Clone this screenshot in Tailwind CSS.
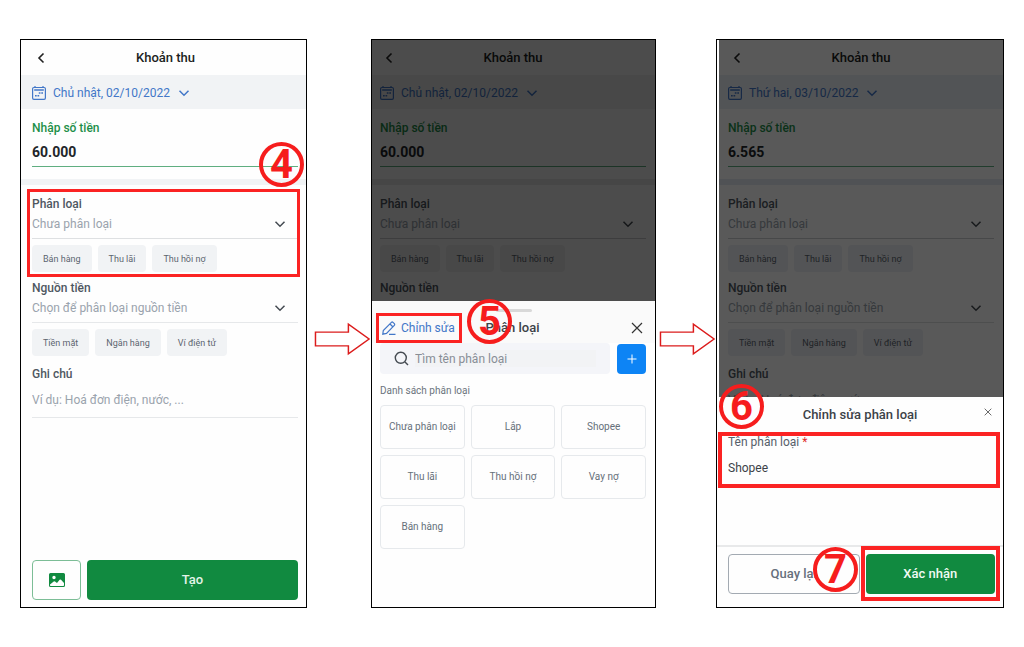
<!DOCTYPE html>
<html lang="vi">
<head>
<meta charset="utf-8">
<meta name="viewport" content="width=device-width, initial-scale=1">
<title>Khoản thu</title>
<script src="https://cdn.jsdelivr.net/npm/@tailwindcss/browser@4"></script>
</head>
<body class="bg-white font-[Roboto,'Noto_Sans',sans-serif] text-xs text-[#5c6570]">
<svg class="hidden" aria-hidden="true">
  <symbol id="back" viewBox="0 0 8 12"><path d="M6.5 1.5 2 6l4.500 4.500" fill="none" stroke="currentColor" stroke-width="1.600"/></symbol>
  <symbol id="down" viewBox="0 0 12 8"><path d="M1.500 1.800 6 6.200l4.500-4.400" fill="none" stroke="currentColor" stroke-width="1.500"/></symbol>
  <symbol id="cal" viewBox="0 0 14 14"><rect x=".6" y="1.500" width="12.800" height="11.900" rx="1.300" fill="none" stroke="currentColor" stroke-width="1.200"/><path d="M3 0v2M11 0v2" stroke="currentColor" stroke-width="1.200"/><path d="M2.200 4h9.600" stroke="currentColor" stroke-width="1.500"/><path d="M6.800 7h1.700M9.300 7H11M3 9.800h1.700M5.500 9.800h1.700" stroke="currentColor" stroke-width="1.600"/></symbol>
  <symbol id="cross" viewBox="0 0 12 12"><path d="m1 1 10 10M11 1 1 11" fill="none" stroke="currentColor" stroke-width="1.200"/></symbol>
  <symbol id="arrow" viewBox="0 0 58 34"><path d="M1.500 10H35V2l21 15-21 15v-8H1.500z" fill="#fff" stroke="#dc1c1c" stroke-width="1.500"/></symbol>
</svg>

<main class="grid min-h-screen grid-cols-[287fr_64fr_285fr_60fr_288fr] px-5 py-[39px]">

  <section class="relative flex flex-col overflow-hidden border border-black bg-[#fefefe]">
    <header class="grid h-[35px] grid-cols-[1fr_auto_1fr] items-center pl-4 pr-3">
      <button type="button" aria-label="Quay lại" class="text-[#222]"><svg class="h-3 w-2"><use href="#back"/></svg></button>
      <h1 class="text-[13px] font-medium text-[#1c1f22]">Khoản thu</h1>
    </header>
    <button type="button" class="flex h-[34px] items-center bg-[#f1f3f5] pl-[11px] pt-0.5 text-[#4277c8]">
      <svg class="h-3.5 w-3.5"><use href="#cal"/></svg><span class="ml-[7px] mr-2">Chủ nhật, 02/10/2022</span><svg class="h-2 w-3"><use href="#down"/></svg>
    </button>
    <div class="mb-3 flex flex-col pl-[11px] pr-2 pt-[9px]">
      <label for="amount1" class="leading-5 font-medium text-[#1d8f48]">Nhập số tiền</label>
      <input id="amount1" value="60.000" class="h-[29px] w-full border-b border-[#5fae80] bg-transparent text-sm font-bold text-[#222529] outline-none">
    </div>
    <div class="h-1.5 bg-[#f1f3f5]"></div>
    <div class="flex flex-col pl-[11px] pr-2 pt-[9px]">
      <div class="relative flex flex-col">
        <label for="cat1" class="leading-5 font-medium text-[#4e5761]">Phân loại</label>
        <div class="flex items-center border-b border-[#dee0e2] pb-1 pr-3">
          <select id="cat1" class="h-5 flex-1 appearance-none bg-transparent text-[#9aa3ad]"><option>Chưa phân loại</option></select>
          <svg class="h-2 w-3 text-[#454b52]"><use href="#down"/></svg>
        </div>
        <div class="mt-1.5 flex gap-1.5 text-[9px]">
          <button type="button" class="h-[27px] rounded bg-[#f1f3f5] px-[11px]">Bán hàng</button>
          <button type="button" class="h-[27px] rounded bg-[#f1f3f5] px-[11px]">Thu lãi</button>
          <button type="button" class="h-[27px] rounded bg-[#f1f3f5] px-[11px]">Thu hồi nợ</button>
        </div>
        <div class="pointer-events-none absolute -bottom-[5px] -left-[5px] -right-0.5 -top-[5px] border-[3px] border-[#fb2323]"></div>
      </div>
      <label for="src1" class="mt-1.5 leading-5 font-medium text-[#4e5761]">Nguồn tiền</label>
      <div class="flex items-center border-b border-[#e6e8ea] pb-1 pr-3">
        <select id="src1" class="h-5 flex-1 appearance-none bg-transparent text-[#9aa3ad]"><option>Chọn để phân loại nguồn tiền</option></select>
        <svg class="h-2 w-3 text-[#454b52]"><use href="#down"/></svg>
      </div>
      <div class="mt-1.5 flex gap-1.5 text-[9px]">
        <button type="button" class="h-[27px] rounded bg-[#f1f3f5] px-[11px]">Tiền mặt</button>
        <button type="button" class="h-[27px] rounded bg-[#f1f3f5] px-[11px]">Ngân hàng</button>
        <button type="button" class="h-[27px] rounded bg-[#f1f3f5] px-[11px]">Ví điện tử</button>
      </div>
      <label for="note1" class="mt-2 leading-5 font-medium text-[#4e5761]">Ghi chú</label>
      <input id="note1" placeholder="Ví dụ: Hoá đơn điện, nước, ..." class="h-[34px] border-b border-[#e6e8ea] bg-transparent pb-0.5 outline-none placeholder:text-[#9aa3ad]">
    </div>
    <div class="mt-auto flex gap-1.5 pb-[7px] pl-[11px] pr-2">
      <button type="button" aria-label="Thêm ảnh" class="flex h-10 w-[49px] items-center justify-center rounded border border-[#7cbd96] text-[#118a40]">
        <svg class="h-4 w-4" viewBox="0 0 16 16"><path fill="currentColor" fill-rule="evenodd" d="M1.500 1h13A1.500 1.500 0 0 1 16 2.500v11a1.500 1.500 0 0 1-1.500 1.500h-13A1.500 1.500 0 0 1 0 13.500v-11A1.500 1.500 0 0 1 1.500 1M5 3.800a1.700 1.700 0 1 0 0 3.400 1.700 1.700 0 0 0 0-3.400M1 13.300q0 .7.700.7h12.600q.7 0 .7-.7V11l-3-3.200q-.7-.6-1.400 0L8 11 6 9.500q-.7-.4-1.300 0L1 12.500z"/></svg>
      </button>
      <button type="button" class="h-10 flex-1 rounded bg-[#118a40] text-[13px] font-medium text-[#e4f5ea]">Tạo</button>
    </div>
    <div class="absolute right-0.5 top-[102px] flex size-[45px] items-center justify-center rounded-full border-4 border-[#f61d1d] text-[40px] leading-none font-bold text-[#f61d1d]">4</div>
  </section>

  <div class="pl-[7px] pt-[283px]"><svg class="h-[34px] w-full" role="img" aria-label="Bước tiếp theo"><use href="#arrow"/></svg></div>

  <section class="relative flex flex-col overflow-hidden border border-black bg-[#fefefe]">
    <header class="grid h-[35px] grid-cols-[1fr_auto_1fr] items-center pl-[13px] pr-3.5">
      <button type="button" aria-label="Quay lại" class="text-[#222]"><svg class="h-3 w-2"><use href="#back"/></svg></button>
      <h1 class="text-[13px] font-medium text-[#1c1f22]">Khoản thu</h1>
    </header>
    <button type="button" class="flex h-[34px] items-center bg-[#f1f1f1] pl-2 pt-0.5 text-[#4277c8]">
      <svg class="h-3.5 w-3.5"><use href="#cal"/></svg><span class="ml-[7px] mr-2">Chủ nhật, 02/10/2022</span><svg class="h-2 w-3"><use href="#down"/></svg>
    </button>
    <div class="mb-3 flex flex-col pl-2 pr-[9px] pt-[9px]">
      <label for="amount2" class="leading-5 font-medium text-[#1d8f48]">Nhập số tiền</label>
      <input id="amount2" value="60.000" class="h-[29px] w-full border-b border-[#5fae80] bg-transparent text-sm font-bold text-[#222529] outline-none">
    </div>
    <div class="h-1.5 bg-[#eaeaea]"></div>
    <div class="flex flex-col pl-2 pr-[9px] pt-[9px]">
      <label for="cat2" class="leading-5 font-medium text-[#4e5761]">Phân loại</label>
      <div class="flex items-center border-b border-[#ccced0] pb-1 pr-3">
        <select id="cat2" class="h-5 flex-1 appearance-none bg-transparent text-[#9aa3ad]"><option>Chưa phân loại</option></select>
        <svg class="h-2 w-3 text-[#454b52]"><use href="#down"/></svg>
      </div>
      <div class="mt-1.5 flex gap-1.5 text-[9px]">
        <button type="button" class="h-[27px] rounded bg-[#f1f1f1] px-[11px]">Bán hàng</button>
        <button type="button" class="h-[27px] rounded bg-[#f1f1f1] px-[11px]">Thu lãi</button>
        <button type="button" class="h-[27px] rounded bg-[#f1f1f1] px-[11px]">Thu hồi nợ</button>
      </div>
      <span class="mt-1.5 leading-5 font-medium text-[#4e5761]">Nguồn tiền</span>
    </div>
    <div class="absolute inset-0 bg-black/70"></div>
    <div role="dialog" aria-labelledby="sheet2" class="absolute inset-x-0 bottom-0 top-[261px] bg-[#fefefe]">
      <div class="bg-[#fafafa] pt-2">
        <div class="mx-auto h-[3px] w-9 rounded bg-[#d9d9d9]"></div>
        <div class="grid h-[31px] grid-cols-[1fr_auto_1fr] items-center pl-2.5 pr-3">
          <div class="relative flex">
            <button type="button" class="flex items-center gap-[5px] text-[#4277c8]">
              <svg class="h-3.5 w-3.5" viewBox="0 0 14 14" fill="none" stroke="currentColor" stroke-width="1.200"><path d="m.8 13.200.5-3.700L9.400 1.400q.8-.8 1.600 0l1.300 1.300q.8.8 0 1.600L4.500 12.400zM8 3l3 3M7 13.300h6.500"/></svg>
              <span>Chỉnh sửa</span>
            </button>
            <div class="pointer-events-none absolute -inset-y-[7px] -left-1.5 w-[86px] border-[3px] border-[#fb2323]"></div>
          </div>
          <h2 id="sheet2" class="text-[13px] font-medium text-[#3c4248]">Phân loại</h2>
          <button type="button" aria-label="Đóng" class="justify-self-end text-[#333]"><svg class="size-3"><use href="#cross"/></svg></button>
        </div>
      </div>
      <div class="flex gap-[7px] pl-2 pr-[9px]">
        <label class="flex h-[31px] min-w-0 flex-1 items-center gap-1.5 rounded bg-[#f4f5f9] pl-3.5 pr-3.5">
          <svg class="size-[15px] shrink-0" viewBox="0 0 15 15" fill="none" stroke="#454b52" stroke-width="1.400"><circle cx="6.800" cy="6.800" r="5.500"/><path d="m11 11 3 3"/></svg>
          <input type="search" aria-label="Tìm tên phân loại" placeholder="Tìm tên phân loại" class="h-[17px] min-w-0 flex-1 bg-[#f2f3f5] outline-none placeholder:text-[#888e96]">
        </label>
        <button type="button" aria-label="Thêm phân loại" class="mt-px flex h-[30px] w-[29px] items-center justify-center rounded bg-[#0d84f5] text-white"><svg class="size-2.5" viewBox="0 0 10 10"><path d="M5 .5v9M.5 5h9" stroke="currentColor"/></svg></button>
      </div>
      <p class="px-2 pt-[9px] text-[10px] leading-4 text-[#6c747d]">Danh sách phân loại</p>
      <div class="mt-1.5 grid grid-cols-3 gap-x-1.5 gap-y-1.5 pl-2 pr-[9px] text-[10px] text-[#66707a]">
        <button type="button" class="h-11 rounded border border-[#e6e9ec]">Chưa phân loại</button>
        <button type="button" class="h-11 rounded border border-[#e6e9ec]">Lắp</button>
        <button type="button" class="h-11 rounded border border-[#e6e9ec]">Shopee</button>
        <button type="button" class="h-11 rounded border border-[#e6e9ec]">Thu lãi</button>
        <button type="button" class="h-11 rounded border border-[#e6e9ec]">Thu hồi nợ</button>
        <button type="button" class="h-11 rounded border border-[#e6e9ec]">Vay nợ</button>
        <button type="button" class="h-11 rounded border border-[#e6e9ec]">Bán hàng</button>
      </div>
    </div>
    <div class="absolute left-[95px] top-[259px] flex size-[45px] items-center justify-center rounded-full border-4 border-[#f61d1d] text-[40px] leading-none font-bold text-[#f61d1d]">5</div>
  </section>

  <div class="pl-[3px] pt-[283px]"><svg class="h-[34px] w-full" role="img" aria-label="Bước tiếp theo"><use href="#arrow"/></svg></div>

  <section class="relative flex flex-col overflow-hidden border border-black bg-[#fefefe] pl-0.5">
    <header class="grid h-[35px] grid-cols-[1fr_auto_1fr] items-center px-3.5">
      <button type="button" aria-label="Quay lại" class="text-[#222]"><svg class="h-3 w-2"><use href="#back"/></svg></button>
      <h1 class="text-[13px] font-medium text-[#1c1f22]">Khoản thu</h1>
    </header>
    <button type="button" class="flex h-[34px] items-center bg-[#eaeff6] pl-[9px] pt-0.5 text-[#4277c8]">
      <svg class="h-3.5 w-3.5"><use href="#cal"/></svg><span class="ml-[7px] mr-2">Thứ hai, 03/10/2022</span><svg class="h-2 w-3"><use href="#down"/></svg>
    </button>
    <div class="mb-3 flex flex-col pl-[9px] pr-[9px] pt-[9px]">
      <label for="amount3" class="leading-5 font-medium text-[#1d8f48]">Nhập số tiền</label>
      <input id="amount3" value="6.565" class="h-[29px] w-full border-b border-[#5fae80] bg-transparent text-sm font-bold text-[#222529] outline-none">
    </div>
    <div class="h-1.5 bg-[#e6ebf2]"></div>
    <div class="flex flex-col pl-[9px] pr-[9px] pt-[9px]">
      <label for="cat3" class="leading-5 font-medium text-[#4e5761]">Phân loại</label>
      <div class="flex items-center border-b border-[#ccced0] pb-1 pr-3">
        <select id="cat3" class="h-5 flex-1 appearance-none bg-transparent text-[#9aa3ad]"><option>Chưa phân loại</option></select>
        <svg class="h-2 w-3 text-[#454b52]"><use href="#down"/></svg>
      </div>
      <div class="mt-1.5 flex gap-1.5 text-[9px]">
        <button type="button" class="h-[27px] rounded bg-[#edf0f5] px-[11px]">Bán hàng</button>
        <button type="button" class="h-[27px] rounded bg-[#edf0f5] px-[11px]">Thu lãi</button>
        <button type="button" class="h-[27px] rounded bg-[#edf0f5] px-[11px]">Thu hồi nợ</button>
      </div>
      <label for="src3" class="mt-1.5 leading-5 font-medium text-[#4e5761]">Nguồn tiền</label>
      <div class="flex items-center border-b border-[#dcdee0] pb-1 pr-3">
        <select id="src3" class="h-5 flex-1 appearance-none bg-transparent text-[#9aa3ad]"><option>Chọn để phân loại nguồn tiền</option></select>
        <svg class="h-2 w-3 text-[#454b52]"><use href="#down"/></svg>
      </div>
      <div class="mt-1.5 flex gap-1.5 text-[9px]">
        <button type="button" class="h-[27px] rounded bg-[#edf0f5] px-[11px]">Tiền mặt</button>
        <button type="button" class="h-[27px] rounded bg-[#edf0f5] px-[11px]">Ngân hàng</button>
        <button type="button" class="h-[27px] rounded bg-[#edf0f5] px-[11px]">Ví điện tử</button>
      </div>
      <label for="note3" class="mt-2 leading-5 font-medium text-[#4e5761]">Ghi chú</label>
      <input id="note3" placeholder="Ví dụ: Hoá đơn điện, nước, ..." class="h-[34px] border-b border-[#e6e8ea] bg-transparent pb-0.5 outline-none placeholder:text-[#9aa3ad]">
    </div>
    <div class="absolute inset-y-0 left-0.5 right-0 bg-black/65"></div>
    <div role="dialog" aria-labelledby="sheet3" class="absolute inset-x-0 bottom-0 top-[357px] flex flex-col bg-[#fefefe]">
      <div class="grid h-[35px] grid-cols-[1fr_auto_1fr] items-center px-[11px]">
        <h2 id="sheet3" class="col-start-2 text-[13px] font-medium text-[#3c4248]">Chỉnh sửa phân loại</h2>
        <button type="button" aria-label="Đóng" class="justify-self-end pb-1.5 text-[#444]"><svg class="size-2" viewBox="0 0 12 12"><use href="#cross"/></svg></button>
      </div>
      <div class="ml-px mr-[3px] flex h-14 flex-col border-4 border-[#fb2323] pl-1.5">
        <label for="name3" class="leading-3 text-[#56606a]">Tên phân loại <span class="text-[#e02b2b]">*</span></label>
        <input id="name3" value="Shopee" class="mt-1.5 h-7 bg-transparent text-[#3c4248] outline-none">
      </div>
      <div class="mt-auto flex gap-1.5 border-t-2 border-[#e8e9ea] pb-[13px] pl-[11px] pr-2 pt-[7px] text-[13px]">
        <button type="button" class="h-10 flex-1 rounded border border-[#a3aab2] font-medium text-[#66707c]">Quay lại</button>
        <div class="relative flex flex-1">
          <button type="button" class="h-10 flex-1 rounded bg-[#118a40] font-medium text-[#f0faf3]">Xác nhận</button>
          <div class="pointer-events-none absolute -inset-x-[5px] -bottom-[7px] -top-2 border-4 border-[#fb2323]"></div>
        </div>
      </div>
    </div>
    <div class="absolute left-0.5 top-[344px] flex size-[45px] items-center justify-center rounded-full border-4 border-[#f61d1d] text-[40px] leading-none font-bold text-[#f61d1d]">6</div>
    <div class="absolute bottom-[15px] right-[145px] flex size-[45px] items-center justify-center rounded-full border-4 border-[#f61d1d] text-[40px] leading-none font-bold text-[#f61d1d]">7</div>
  </section>
</main>
</body>
</html>
